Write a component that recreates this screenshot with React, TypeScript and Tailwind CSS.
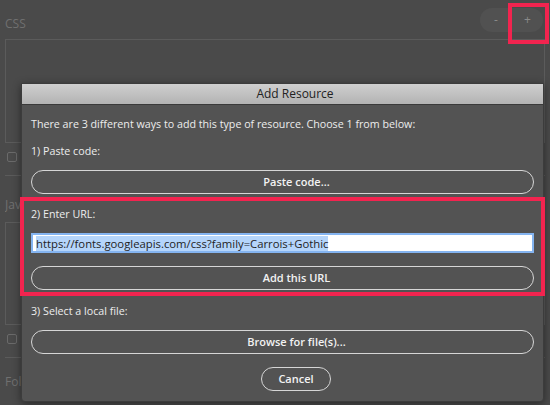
import React from "react";

const font = { fontFamily: '"Open Sans", "Liberation Sans", Arial, sans-serif' };

function PillButton({ label, className = "" }: { label: string; className?: string }) {
  return (
    <button
      className={`h-[24px] rounded-full border-[1.5px] border-[#d6d6d6] bg-[#535353] text-[11px] font-semibold text-[#f2f2f2] ${className}`}
    >
      {label}
    </button>
  );
}

function Checkbox() {
  return <div className="ml-[2px] h-[10px] w-[10px] rounded-[2px] border border-[#6a6a6a]" />;
}

export default function App() {
  return (
    <div className="relative h-[405px] w-[550px] overflow-hidden bg-[#4a4a4a]" style={font}>
      {/* background editor panel */}
      <div className="flex flex-col px-[5px]">
        <div className="flex h-[39px] items-center justify-between pr-[2px]">
          <span className="mt-[8px] text-[12px] text-[#707070]">CSS</span>
          <div className="flex h-[24px] w-[63px] items-center rounded-full bg-[#515151] text-[12px] text-[#8a8a8a]">
            <span className="w-[32px] text-center">-</span>
            <span className="w-[31px] text-center">+</span>
          </div>
        </div>
        <div className="h-[104px] border border-[#5b5b5b]" />
        <div className="mt-[8px] flex h-[12px] items-center">
          <Checkbox />
        </div>
        <div className="mt-[12px] h-px bg-[#5b5b5b]" />
        <span className="mt-[21px] w-[16px] overflow-hidden whitespace-nowrap text-[12px] leading-[16px] text-[#707070]">
          Jav
        </span>
        <div className="mt-[9px] h-[103px] border border-[#5b5b5b]" />
        <div className="mt-[8px] flex h-[12px] items-center">
          <Checkbox />
        </div>
        <div className="mt-[12px] h-px bg-[#5b5b5b]" />
        <span className="mt-[16px] w-[16px] overflow-hidden whitespace-nowrap text-[12px] leading-[16px] text-[#707070]">
          Fol
        </span>
      </div>

      {/* annotation on the + button */}
      <div className="absolute left-[508px] top-[3px] h-[41px] w-[41px] border-4 border-[#f2244f]" />

      {/* modal dialog */}
      <div className="absolute left-[21px] top-[83px] flex h-[319px] w-[523px] flex-col rounded-b-[4px] border border-[#3c3c3c] bg-[#535353] shadow-[0_2px_8px_rgba(0,0,0,0.45)]">
        <div className="flex h-[21px] shrink-0 items-center justify-center border-b border-[#3a3a3a] bg-gradient-to-b from-[#cfcfcf] to-[#b3b3b3] pl-[25px] text-[12px] text-[#222]">
          Add Resource
        </div>
        <div className="relative flex flex-col px-[9px] text-[10.7px] text-[#ededed]">
          <p className="mt-[11px] leading-[16px]">
            There are 3 different ways to add this type of resource. Choose 1 from below:
          </p>
          <p className="mt-[11px] leading-[16px]">1) Paste code:</p>
          <PillButton label="Paste code..." className="mt-[11px] pl-[28px]" />

          <p className="mt-[12px] leading-[16px]">2) Enter URL:</p>
          <div className="mt-[11px] flex h-[20px] items-center border-2 border-[#84b4f0] bg-white px-[3px] text-[11.3px] text-[#1e1e1e]">
            <span className="bg-[#b5d5fb] leading-[15px]">
              https://fonts.googleapis.com/css?family=Carrois+Gothic
            </span>
          </div>
          <PillButton label="Add this URL" className="mt-[13px] pl-[28px]" />

          <p className="mt-[13px] leading-[16px]">3) Select a local file:</p>
          <PillButton label="Browse for file(s)..." className="mt-[11px] pl-[28px]" />
          <PillButton label="Cancel" className="ml-[230px] mt-[13px] w-[70px] self-start" />

          {/* annotation around the URL section */}
          <div className="absolute left-[-2px] top-[92px] h-[99px] w-[525px] border-4 border-[#f2244f]" />
        </div>
      </div>
    </div>
  );
}
